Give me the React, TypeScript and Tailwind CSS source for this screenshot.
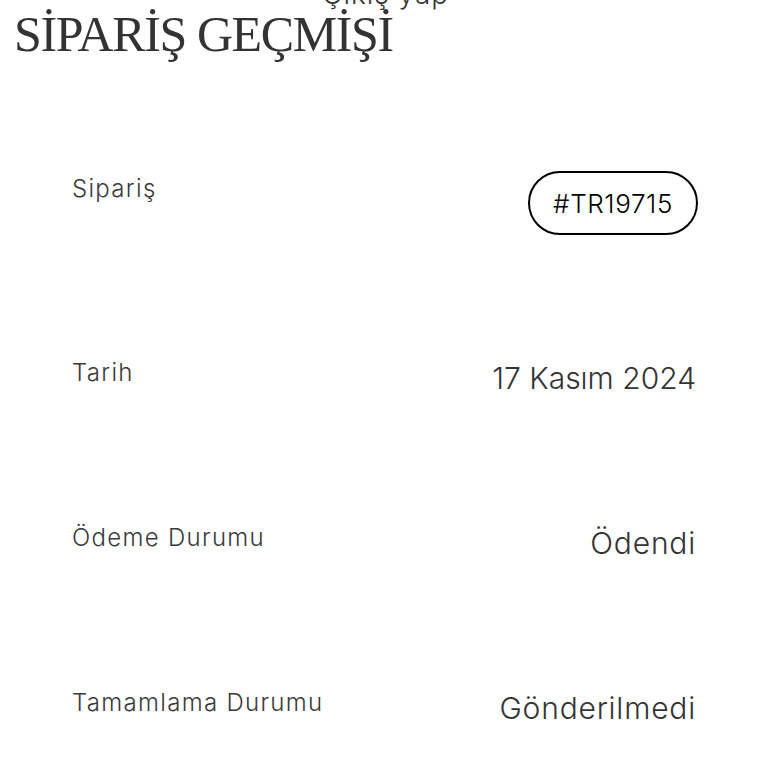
import React from "react";

const sans = { fontFamily: "Inter, 'Noto Sans', sans-serif" };

function Row({ label, children, className = "" }: { label: string; children: React.ReactNode; className?: string }) {
  return (
    <div className={`flex justify-between items-start ${className}`}>
      <span className="mt-[-4px] text-[24px] leading-none font-light text-[#3a3a3a] tracking-[1.3px]" style={sans}>{label}</span>
      {children}
    </div>
  );
}

export default function App() {
  return (
    <div className="w-[768px] h-[768px] bg-white overflow-hidden relative">
      <div className="mt-[-20px] ml-[322px] text-[28px] leading-[28px] text-[#333] font-light tracking-[1px]" style={sans}>Çıkış yap</div>
      <h1 className="ml-[14px] mt-[-4px] text-[50px] leading-[60px] text-[#333] tracking-[-1.4px]" style={{ fontFamily: "'Liberation Serif', serif" }}>
        SİPARİŞ GEÇMİŞİ
      </h1>
      <div className="px-[72px] mt-[117px] flex flex-col">
        <Row label="Sipariş" className="h-[184px]">
          <div className="mt-[-10px] mr-[-2px] w-[170px] h-[64px] rounded-full border-2 border-black flex items-center justify-center text-[26px] text-black font-light tracking-[0.6px]" style={sans}>
            #TR19715
          </div>
        </Row>
        <Row label="Tarih" className="h-[165px]">
          <span className="mt-[-2px] text-[30px] leading-none font-light text-[#333]" style={sans}>17 Kasım 2024</span>
        </Row>
        <Row label="Ödeme Durumu" className="h-[165px]">
          <span className="mt-[-2px] text-[30px] leading-none font-light text-[#333] tracking-[0.8px]" style={sans}>Ödendi</span>
        </Row>
        <Row label="Tamamlama Durumu" className="h-[165px]">
          <span className="mt-[-2px] text-[30px] leading-none font-light text-[#333] tracking-[0.8px]" style={sans}>Gönderilmedi</span>
        </Row>
      </div>
    </div>
  );
}
